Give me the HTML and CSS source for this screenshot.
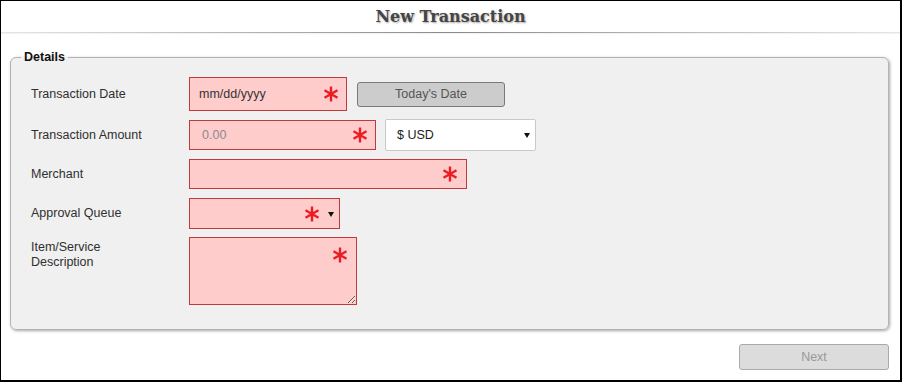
FILE: index.html
```html
<!DOCTYPE html>
<html lang="en">
<head>
<meta charset="utf-8">
<title>New Transaction</title>
<link rel="stylesheet" href="styles.css">
</head>
<body>
<div class="frame">
  <header class="page-header"><h1 class="title">New Transaction</h1></header>
  <div class="rule"></div>
  <fieldset class="details">
    <legend class="legend">Details</legend>
    <div class="form">
      <div class="row row-date">
        <label class="label">Transaction Date</label>
        <div class="field field-date">
          <input class="input input-date" type="text" placeholder="mm/dd/yyyy">
          <svg class="req" viewBox="0 0 16 16"><path d="M8 0.5V15.5M1.5 4.25L14.5 11.75M1.5 11.75L14.5 4.25"/></svg>
        </div>
        <button class="btn-today" type="button">Today's Date</button>
      </div>
      <div class="row row-amount">
        <label class="label">Transaction Amount</label>
        <div class="field field-amount">
          <input class="input input-amount" type="text" placeholder="0.00">
          <svg class="req" viewBox="0 0 16 16"><path d="M8 0.5V15.5M1.5 4.25L14.5 11.75M1.5 11.75L14.5 4.25"/></svg>
        </div>
        <div class="field field-currency">
          <select class="select-currency"><option>$ USD</option></select>
          <svg class="caret" viewBox="0 0 6 5"><path d="M0 0H6L3 5Z"/></svg>
        </div>
      </div>
      <div class="row row-merchant">
        <label class="label">Merchant</label>
        <div class="field field-merchant">
          <input class="input" type="text">
          <svg class="req" viewBox="0 0 16 16"><path d="M8 0.5V15.5M1.5 4.25L14.5 11.75M1.5 11.75L14.5 4.25"/></svg>
        </div>
      </div>
      <div class="row row-queue">
        <label class="label">Approval Queue</label>
        <div class="field field-queue">
          <select class="input select-queue"><option></option></select>
          <svg class="req req-queue" viewBox="0 0 16 16"><path d="M8 0.5V15.5M1.5 4.25L14.5 11.75M1.5 11.75L14.5 4.25"/></svg>
          <svg class="caret" viewBox="0 0 6 5"><path d="M0 0H6L3 5Z"/></svg>
        </div>
      </div>
      <div class="row row-desc">
        <label class="label label-desc">Item/Service<br>Description</label>
        <div class="field field-desc">
          <textarea class="input textarea"></textarea>
          <svg class="req req-top" viewBox="0 0 16 16"><path d="M8 0.5V15.5M1.5 4.25L14.5 11.75M1.5 11.75L14.5 4.25"/></svg>
        </div>
      </div>
    </div>
  </fieldset>
  <div class="actions">
    <button class="btn-next" type="button" disabled>Next</button>
  </div>
</div>
</body>
</html>
```
FILE: styles.css
```css
* { box-sizing: border-box; }
html, body { margin: 0; padding: 0; background: #fff; }
body { font-family: "Liberation Sans", Arial, sans-serif; font-size: 12.5px; color: #333; }

.frame {
  width: 902px;
  height: 382px;
  border: 1px solid #000;
  border-right-width: 2px;
  border-bottom-width: 2px;
  background: #fff;
  overflow: hidden;
}

.page-header {
  height: 31px;
  display: flex;
  align-items: center;
  justify-content: center;
}
.title {
  margin: 0;
  font-family: "DejaVu Serif", Georgia, serif;
  font-weight: bold;
  font-size: 16px;
  color: #454545;
  text-shadow: 1px 1px 2px rgba(0,0,0,0.35);
}
.rule {
  height: 1px;
  background: linear-gradient(to right, #e6e6e6, #8a8a8a 50%, #e6e6e6);
  box-shadow: 0 1px 1px rgba(0,0,0,0.06);
}

.details {
  margin: 17px 11px 0 9px;
  padding: 0;
  border: 1px solid #b3b3b3;
  border-radius: 6px;
  background: #f0f0f0;
  box-shadow: 1px 1px 3px rgba(0,0,0,0.35);
  min-width: 0;
}
.legend {
  margin-left: 10px;
  padding: 0 3px;
  font-weight: bold;
  font-size: 12.5px;
  color: #111;
  line-height: 15px;
}

.form {
  display: flex;
  flex-direction: column;
  gap: 8px;
  padding: 12px 20px 24px 20px;
}
.row {
  display: flex;
  align-items: center;
}
.row-date { height: 34px; }
.row-amount { height: 32px; }
.row-merchant { height: 30px; }
.row-queue { height: 31px; margin-top: 1px; }
.row-desc { align-items: flex-start; }

.label {
  width: 158px;
  flex: none;
  color: #2f2f2f;
  line-height: 15px;
}
.label-desc { padding-top: 3px; }

.field { position: relative; flex: none; }
.field-date { width: 158px; height: 34px; }
.field-amount { width: 187px; height: 30px; }
.field-currency { width: 151px; height: 32px; margin-left: 9px; }
.field-merchant { width: 278px; height: 30px; }
.field-queue { width: 151px; height: 31px; }
.field-desc { width: 168px; height: 68px; }

.input {
  display: block;
  width: 100%;
  height: 100%;
  margin: 0;
  border: 1px solid #c0393b;
  background: #ffcccc;
  padding: 0 9px;
  font-family: "Liberation Sans", Arial, sans-serif;
  font-size: 12.5px;
  color: #333;
  outline: none;
  border-radius: 0;
}
.input-date::placeholder { color: #333; }
.input-amount { padding-left: 12px; }
.input-amount::placeholder { color: #8a8a8a; }
.select-queue { appearance: none; -webkit-appearance: none; }
.textarea { resize: both; padding: 4px 8px; }

.req {
  position: absolute;
  right: 8px;
  top: 50%;
  width: 16px;
  height: 16px;
  margin-top: -8px;
  fill: none;
  stroke: #ec1c24;
  stroke-width: 2.4;
  pointer-events: none;
}
.field-merchant .req { right: 9px; }
.req-queue { right: 20px; }
.req-top { top: 10px; margin-top: 0; right: 9px; }

.caret {
  position: absolute;
  right: 6px;
  top: 50%;
  width: 6px;
  height: 5px;
  margin-top: -2px;
  fill: #111;
  pointer-events: none;
}

.select-currency {
  appearance: none;
  -webkit-appearance: none;
  display: block;
  width: 100%;
  height: 100%;
  margin: 0;
  border: 1px solid #c9c9c9;
  border-radius: 2px;
  background: #fff;
  padding: 0 11px;
  font-family: "Liberation Sans", Arial, sans-serif;
  font-size: 12.5px;
  color: #222;
}

.btn-today {
  width: 148px;
  height: 25px;
  margin-left: 10px;
  border: 1px solid #7a7a7a;
  border-radius: 3px;
  background: #cccccc;
  color: #555;
  font-family: "Liberation Sans", Arial, sans-serif;
  font-size: 12.5px;
  padding: 0;
}

.actions {
  display: flex;
  justify-content: flex-end;
  padding: 14px 11px 0 0;
}
.btn-next {
  width: 150px;
  height: 26px;
  border: 1px solid #a9a9a9;
  border-radius: 3px;
  background: #dcdcdc;
  color: #999;
  font-family: "Liberation Sans", Arial, sans-serif;
  font-size: 12.5px;
  padding: 0;
}
```
